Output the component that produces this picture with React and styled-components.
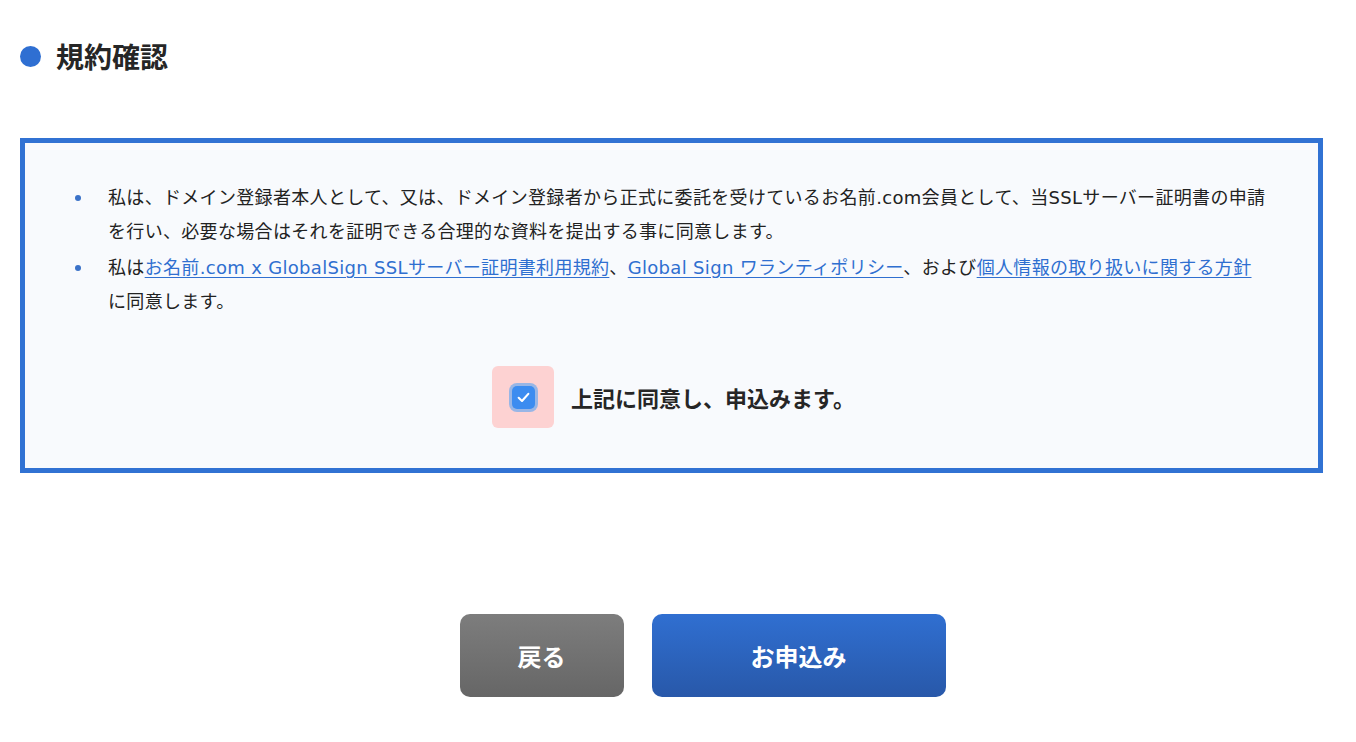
import React from "react";
import styled, { createGlobalStyle } from "styled-components";

const GlobalStyle = createGlobalStyle`
  html, body { margin: 0; padding: 0; background: #fff; }
  body {
    font-family: "DejaVu Sans", "Noto Sans CJK JP", sans-serif;
    color: #222;
  }
`;

const Page = styled.div`
  padding: 36px 33px 40px 20px;
`;

const Heading = styled.h2`
  display: flex;
  align-items: center;
  gap: 15px;
  margin: 0;
  font-family: "Noto Sans CJK JP", sans-serif;
  font-size: 28px;
  line-height: 40px;
  font-weight: 700;
  color: #262626;
`;

const Dot = styled.span`
  width: 21px;
  height: 21px;
  border-radius: 50%;
  background: #2f6fd2;
  flex: none;
`;

const TermsBox = styled.section`
  margin-top: 62px;
  border: 5px solid #3172d3;
  background: #f8fafd;
  padding: 38px 36px 40px 0;
`;

const List = styled.ul`
  list-style: none;
  margin: 0;
  padding: 0 0 0 50px;
`;

const Item = styled.li`
  display: flex;
  align-items: flex-start;
  font-size: 18px;
  line-height: 34px;
  letter-spacing: 0.018em;
  color: #222;
  & + & { margin-top: 2px; }
`;

const Bullet = styled.span`
  flex: none;
  width: 6px;
  height: 6px;
  border-radius: 50%;
  background: #3a72c8;
  margin: 14px 27px 0 0;
`;

const Link = styled.a`
  color: #2f6fd0;
  text-decoration: underline;
  text-underline-offset: 3px;
  cursor: pointer;
`;

const AgreeRow = styled.label`
  margin-top: 47px;
  display: flex;
  justify-content: center;
  align-items: center;
  gap: 17px;
  padding-left: 40px;
  cursor: pointer;
`;

const CheckPad = styled.span`
  width: 62px;
  height: 62px;
  border-radius: 6px;
  background: #fdd2d2;
  display: flex;
  align-items: center;
  justify-content: center;
`;

const CheckBox = styled.span`
  width: 23px;
  height: 23px;
  border-radius: 5px;
  background: #3c8cf0;
  box-shadow: 0 0 0 3px #98b6e6;
  display: flex;
  align-items: center;
  justify-content: center;
`;

const AgreeText = styled.span`
  font-family: "Noto Sans CJK JP", sans-serif;
  font-size: 22px;
  font-weight: 700;
  color: #262626;
`;

const Actions = styled.div`
  margin-top: 141px;
  display: flex;
  justify-content: center;
  gap: 28px;
  padding-left: 62px;
`;

const Button = styled.button`
  height: 83px;
  width: ${(p) => (p.$primary ? "294px" : "164px")};
  border: none;
  border-radius: 10px;
  color: #fff;
  font-family: "Noto Sans CJK JP", sans-serif;
  font-size: 24px;
  font-weight: 700;
  cursor: pointer;
  background: ${(p) =>
    p.$primary
      ? "linear-gradient(to bottom, #306fd1, #2858a9)"
      : "linear-gradient(to bottom, #7d7d7d, #666666)"};
`;

export default function App() {
  return (
    <>
      <GlobalStyle />
      <Page>
        <Heading>
          <Dot />
          規約確認
        </Heading>
        <TermsBox>
          <List>
            <Item>
              <Bullet />
              <span>
                私は、ドメイン登録者本人として、又は、ドメイン登録者から正式に委託を受けているお名前.com会員として、当SSLサーバー証明書の申請
                <br />
                を行い、必要な場合はそれを証明できる合理的な資料を提出する事に同意します。
              </span>
            </Item>
            <Item>
              <Bullet />
              <span>
                私は<Link>お名前.com x GlobalSign SSLサーバー証明書利用規約</Link>、
                <Link>Global Sign ワランティポリシー</Link>、および
                <Link>個人情報の取り扱いに関する方針</Link>
                <br />
                に同意します。
              </span>
            </Item>
          </List>
          <AgreeRow>
            <CheckPad>
              <CheckBox>
                <svg width="15" height="15" viewBox="0 0 14 14" fill="none">
                  <path d="M2.5 7.3 L5.6 10.2 L11.5 3.6" stroke="#fff" strokeWidth="2" strokeLinecap="round" strokeLinejoin="round" />
                </svg>
              </CheckBox>
            </CheckPad>
            <AgreeText>上記に同意し、申込みます。</AgreeText>
          </AgreeRow>
        </TermsBox>
        <Actions>
          <Button>戻る</Button>
          <Button $primary>お申込み</Button>
        </Actions>
      </Page>
    </>
  );
}
